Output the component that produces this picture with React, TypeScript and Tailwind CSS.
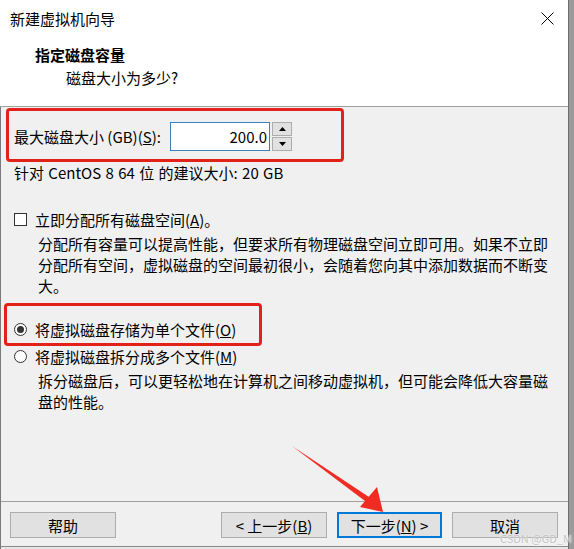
const font = "font-['Segoe_UI','Noto_Sans_CJK_SC',sans-serif]";

function Spinner() {
  return (
    <div className="ml-[2px] flex h-[29px] w-[20px] flex-col gap-[1px]">
      <div className="flex flex-1 items-center justify-center border border-[#adadad] bg-[#e1e1e1]">
        <svg width="7" height="4" viewBox="0 0 7 4">
          <path d="M0 4 L3.5 0 L7 4 Z" fill="#000" />
        </svg>
      </div>
      <div className="flex flex-1 items-center justify-center border border-[#adadad] bg-[#e1e1e1]">
        <svg width="7" height="4" viewBox="0 0 7 4">
          <path d="M0 0 L3.5 4 L7 0 Z" fill="#000" />
        </svg>
      </div>
    </div>
  );
}

function Radio({ checked }: { checked?: boolean }) {
  return (
    <span className="flex h-[13px] w-[13px] items-center justify-center rounded-full border border-[#333] bg-white">
      {checked && <span className="h-[7px] w-[7px] rounded-full bg-[#333]" />}
    </span>
  );
}

function Button({ children, primary }: { children: React.ReactNode; primary?: boolean }) {
  return (
    <div
      className={
        primary
          ? "flex h-[26px] w-[105px] items-center justify-center border-2 border-[#0078d7] bg-[#e1e1e1]"
          : "flex h-[26px] w-[106px] items-center justify-center border border-[#adadad] bg-[#e1e1e1]"
      }
    >
      {children}
    </div>
  );
}

export default function App() {
  return (
    <div className={`relative flex h-[549px] w-[574px] overflow-hidden bg-white text-[15px] leading-[21px] text-black ${font}`}>
      <div className="flex w-[569px] flex-col border-r border-[#6d6d6d]">
        {/* header */}
        <div className="h-[107px] border-b border-[#a0a0a0] bg-white">
          <div className="flex h-[36px] items-center justify-between pl-[10px] pr-[14px]">
            <span>新建虚拟机向导</span>
            <svg width="13" height="13" viewBox="0 0 13 13">
              <path d="M0.5 0.5 L12.5 12.5 M12.5 0.5 L0.5 12.5" stroke="#000" strokeWidth="1" />
            </svg>
          </div>
          <div className="mt-[8px] pl-[35px] font-bold">指定磁盘容量</div>
          <div className="mt-[2px] pl-[66px]">磁盘大小为多少?</div>
        </div>

        {/* body */}
        <div className="flex flex-1 flex-col border-l border-[#7a7a7a] bg-[#f0f0f0]">
          <div className="ml-[5px] mt-[1px] h-[54px] w-[338px] rounded-[4px] border-[3px] border-[#e3211b] pl-[5px] pt-[11px]">
            <div className="flex h-[29px] items-center">
              <span className="w-[156px]">
                最大磁盘大小 (GB)(<u>S</u>):
              </span>
              <div className="flex h-[29px] w-[100px] items-center justify-end border border-[#3c7fc0] bg-white pr-[2px]">
                200.0
              </div>
              <Spinner />
            </div>
          </div>
          <div className="pl-[13px] [word-spacing:1px]">针对 CentOS 8 64 位 的建议大小: 20 GB</div>

          <div className="mt-[26px] flex items-center gap-[8px] pl-[13px]">
            <span className="h-[13px] w-[13px] border border-[#333] bg-white" />
            <span>
              立即分配所有磁盘空间(<u>A</u>)。
            </span>
          </div>
          <p className="mt-[3px] w-[550px] pl-[37px]">
            分配所有容量可以提高性能，但要求所有物理磁盘空间立即可用。如果不立即分配所有空间，虚拟磁盘的空间最初很小，会随着您向其中添加数据而不断变大。
          </p>

          <div className="ml-[3px] mt-[7px] h-[43px] w-[258px] rounded-[4px] border-[3px] border-[#e3211b] pl-[7px] pt-[13px]">
            <div className="flex items-center gap-[8px]">
              <Radio checked />
              <span>
                将虚拟磁盘存储为单个文件(<u>O</u>)
              </span>
            </div>
          </div>
          <div className="flex items-center gap-[8px] pl-[13px]">
            <Radio />
            <span>
              将虚拟磁盘拆分成多个文件(<u>M</u>)
            </span>
          </div>
          <p className="mt-[3px] w-[550px] pl-[37px]">
            拆分磁盘后，可以更轻松地在计算机之间移动虚拟机，但可能会降低大容量磁盘的性能。
          </p>

          <div className="flex-1" />

          {/* footer */}
          <div className="border-t border-[#a0a0a0] pb-[8px] pt-[10px]">
            <div className="flex items-center pl-[9px] pr-[10px]">
              <Button>帮助</Button>
              <div className="ml-auto flex gap-[10px]">
                <Button>
                  &lt; 上一步(<u>B</u>)
                </Button>
                <Button primary>
                  下一步(<u>N</u>) &gt;
                </Button>
                <Button>取消</Button>
              </div>
            </div>
          </div>
          <div className="h-[3px] border-t border-[#8a8a8a] bg-[#e6e6e6]" />
        </div>
      </div>
      <div className="w-[5px] bg-[#9b9b9b]" />

      {/* annotation arrow */}
      <svg className="pointer-events-none absolute left-0 top-0" width="574" height="549">
        <path d="M292 446 L372 499 L369 504 Z" fill="#ef2b22" />
        <path d="M383 512 L360 507 L377 487 Z" fill="#ef2b22" />
      </svg>

      {/* watermark */}
      <span className="pointer-events-none absolute left-[500px] top-[532px] whitespace-nowrap text-[11px] leading-[13px] text-[#c4c4c4] [text-shadow:0_0_2px_#fff]">
        CSDN @GD_M
      </span>
    </div>
  );
}
